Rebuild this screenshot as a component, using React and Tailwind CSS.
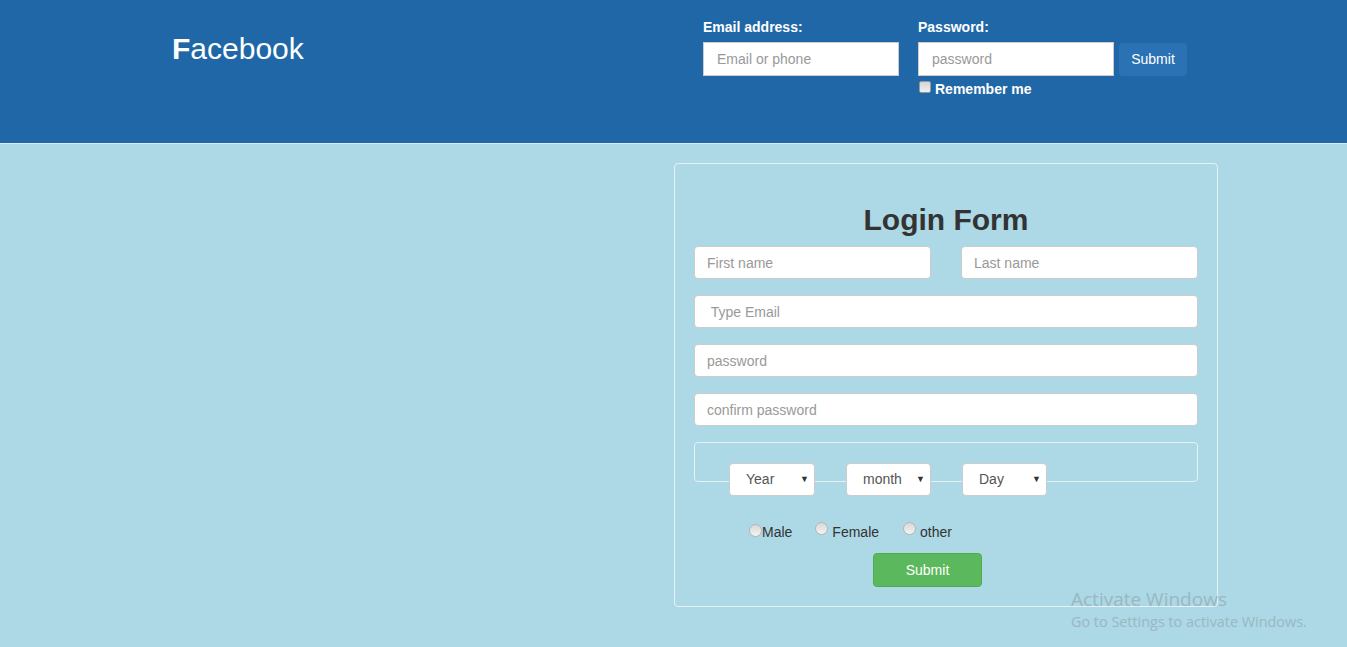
import React from "react";

const font = { fontFamily: '"Liberation Sans", Arial, sans-serif' };

function Field({ placeholder, type = "text", className = "" }) {
  return (
    <input
      type={type}
      placeholder={placeholder}
      className={`h-[33px] rounded-[4px] border border-[#ccc] bg-white px-3 text-[14px] text-[#555] placeholder:text-[#999] outline-none ${className}`}
    />
  );
}

function Select({ label, w = "w-[86px]" }) {
  return (
    <div className={`relative h-[33px] ${w} flex items-center rounded-[4px] border border-[#ccc] bg-white pl-4 text-[14px] text-[#555]`}>
      <span>{label}</span>
      <span className="absolute right-[5px] top-[9px] text-[9px] text-[#333]">▼</span>
    </div>
  );
}

function Radio({ name }) {
  return (
    <input
      type="radio"
      name={name}
      className="relative top-[-2px] h-[13px] w-[13px] appearance-none rounded-full border border-[#b5b5b5] bg-linear-to-b from-[#d8d8d8] to-[#f4f4f4]"
    />
  );
}

export default function App() {
  return (
    <div className="relative min-h-screen bg-[#add8e6]" style={font}>
      {/* top bar */}
      <header className="flex h-[144px] border-b border-[#d6ecf3] bg-[#1f67a7] pl-[172px]">
        <div className="w-[531px] pt-[32px] text-[30px] leading-[34px] text-white">
          <span className="font-bold">F</span>acebook
        </div>
        <div className="pt-[17px]">
          <div className="flex">
            <div className="w-[215px]">
              <label className="block text-[14px] font-bold leading-[20px] text-white">Email address:</label>
              <input
                placeholder="Email or phone"
                className="mt-[5px] h-[34px] w-[196px] border border-[#ccc] bg-white px-[13px] text-[14px] placeholder:text-[#999] outline-none"
              />
            </div>
            <div>
              <label className="block text-[14px] font-bold leading-[20px] text-white">Password:</label>
              <div className="mt-[5px] flex gap-[5px]">
                <input
                  type="password"
                  placeholder="password"
                  className="h-[34px] w-[196px] border border-[#ccc] bg-white px-[13px] text-[14px] placeholder:text-[#999] outline-none"
                />
                <button className="mt-[1px] h-[33px] w-[68px] rounded-[4px] bg-[#2b72b4] text-[14px] text-white">Submit</button>
              </div>
              <div className="mt-[4px] flex items-center">
                <input
                  type="checkbox"
                  className="relative top-[-2px] ml-[1px] h-[12px] w-[12px] appearance-none rounded-[2px] border border-[#999] bg-linear-to-b from-[#d4d4d4] to-[#f0f0f0]"
                />
                <span className="ml-[4px] text-[14px] font-bold leading-[18px] text-white">Remember me</span>
              </div>
            </div>
          </div>
        </div>
      </header>

      {/* body */}
      <main className="flex pl-[674px] pt-[19px] pb-[40px]">
        <div className="w-[544px] rounded-[4px] border border-[#e4f2f6] px-[19px] pt-[38px] pb-[19px]">
          <h1 className="text-center text-[30px] font-bold leading-[36px] text-[#333]">Login Form</h1>
          <div className="mt-[8px] flex justify-between">
            <Field placeholder="First name" className="w-[237px]" />
            <Field placeholder="Last name" className="w-[237px]" />
          </div>
          <Field placeholder=" Type Email" className="mt-[16px] w-full" />
          <Field type="password" placeholder="password" className="mt-[16px] w-full" />
          <Field type="password" placeholder="confirm password" className="mt-[16px] w-full" />

          <div className="mt-[16px] h-[40px] rounded-[4px] border border-[#e4f2f6]" />
          <div className="mt-[-19px] flex gap-[31px] pl-[35px]">
            <Select label="Year" />
            <Select label="month" w="w-[85px]" />
            <Select label="Day" w="w-[85px]" />
          </div>

          <div className="mt-[26px] flex items-center pl-[55px] text-[14px] text-[#333]">
            <Radio name="g" />
            <span>Male</span>
            <span className="ml-[23px]"><Radio name="g" /></span>
            <span className="ml-[4px]">Female</span>
            <span className="ml-[24px]"><Radio name="g" /></span>
            <span className="ml-[4px]">other</span>
          </div>

          <div className="mt-[10px] flex pl-[179px]">
            <button className="h-[34px] w-[109px] rounded-[4px] border border-[#4cae4c] bg-[#5cb85c] text-[14px] text-white">
              Submit
            </button>
          </div>
        </div>
      </main>

      {/* os watermark */}
      <div className="pointer-events-none absolute left-[1071px] top-[587px] text-[#9ab7c2]" style={{ fontFamily: '"Open Sans", "Noto Sans", sans-serif' }}>
        <div className="text-[19px] leading-[24px]">Activate Windows</div>
        <div className="text-[14.4px] leading-[22px]">Go to Settings to activate Windows.</div>
      </div>
    </div>
  );
}
